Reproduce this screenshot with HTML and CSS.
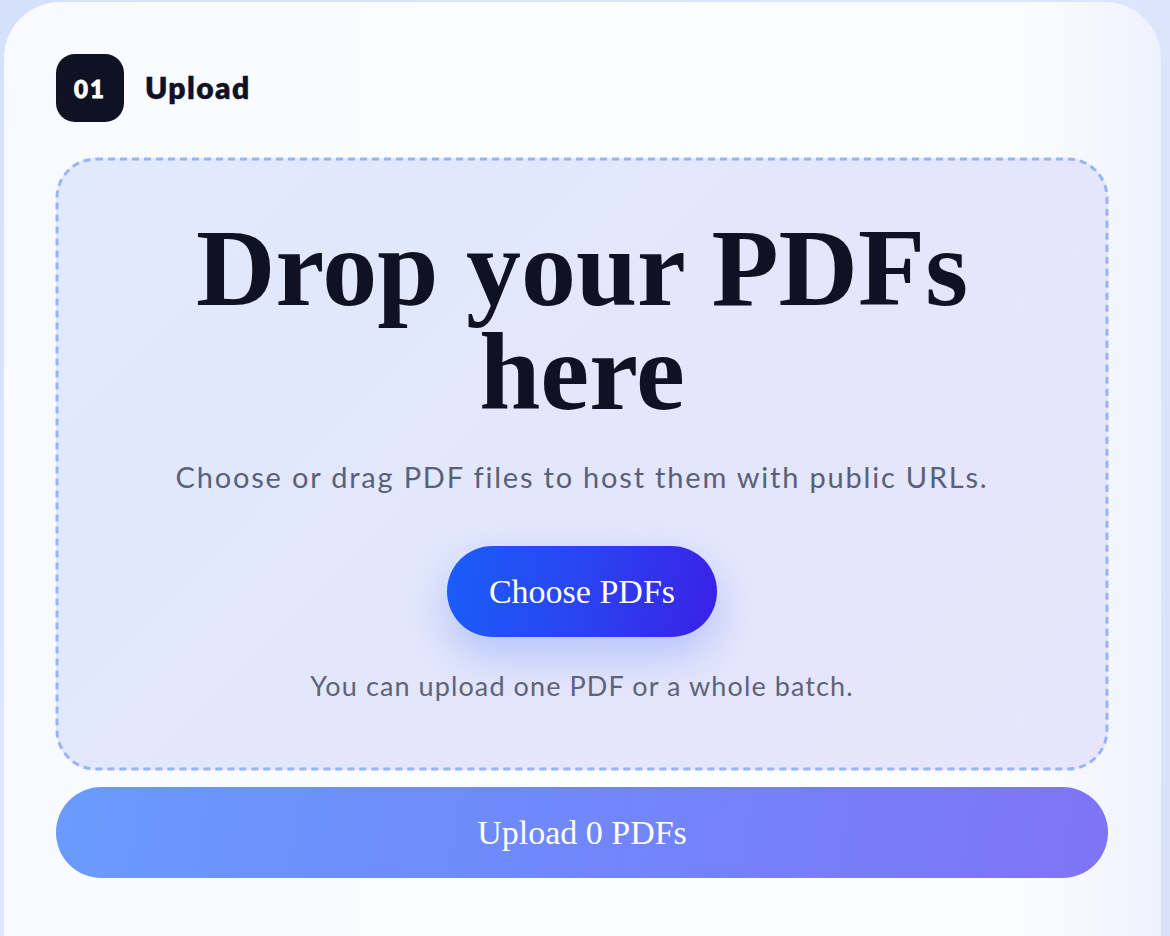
FILE: index.html
```html
<!DOCTYPE html>
<html lang="en">
<head>
    <meta charset="UTF-8">
    <meta name="viewport" content="width=device-width, initial-scale=1.0">
    <title>Host PDFs</title>
    <link rel="stylesheet" href="styles.css">
</head>
<body>
    <main class="upload-card">
        <div class="step-head">
            <span class="step-num">01</span>
            <h2 class="step-title">Upload</h2>
        </div>

        <!-- drop area, dashed frame drawn as svg so the dash length can be set -->
        <div class="dropzone" id="dropzone">
            <svg class="dash-frame" aria-hidden="true">
                <rect x="0" y="0" width="100%" height="100%" rx="39" ry="39"></rect>
            </svg>
            <h1 class="drop-title">Drop your PDFs<br>here</h1>
            <p class="drop-text">Choose or drag PDF files to host them with public URLs.</p>
            <button type="button" class="choose-btn">Choose PDFs</button>
            <p class="drop-hint">You can upload one PDF or a whole batch.</p>
        </div>

        <button type="button" class="upload-btn" id="uploadBtn">Upload 0 PDFs</button>
    </main>
</body>
</html>
```

FILE: styles.css
```css
html, body {
    margin: 0;
    height: 100%;
    overflow: hidden;
}
body {
    background: linear-gradient(135deg, #d5e1fb 0%, #dde7fc 40%, #d8e1f8 100%);
    padding: 2px 9px 0 4px;
    font-family: 'Lato', 'Noto Sans', sans-serif;
    color: #0f1222;
}
.upload-card {
    box-sizing: border-box;
    height: 1000px;
    padding: 52px 53px 0 52px;
    border-radius: 56px 56px 0 0;
    background: linear-gradient(90deg, #f8faff 0%, #fcfdff 50%, #fbfcff 88%, #eef2fd 100%);
}
.step-head {
    display: flex;
    align-items: center;
    gap: 21px;
}
.step-num {
    width: 68px;
    height: 68px;
    border-radius: 19px;
    background: #0f1222;
    color: #fff;
    display: flex;
    align-items: center;
    justify-content: center;
    font-weight: 900;
    font-size: 24px;
    letter-spacing: 2px;
    -webkit-text-stroke: 0.9px #fff;
}
.step-title {
    margin: 0 0 3px;
    font-size: 30px;
    font-weight: 800;
    letter-spacing: 1.4px;
    color: #0f1222;
    -webkit-text-stroke: 0.4px #0f1222;
}
.dropzone {
    position: relative;
    margin-top: 36px;
    box-sizing: border-box;
    height: 612px;
    padding-top: 58px;
    border-radius: 40px;
    background: linear-gradient(135deg, #e1e9fc 0%, #e3e7fb 50%, #e7e5fb 100%);
    text-align: center;
}
.dash-frame {
    position: absolute;
    top: 1px;
    left: 1px;
    width: calc(100% - 2px);
    height: calc(100% - 2px);
    overflow: visible;
    pointer-events: none;
}
.dash-frame rect {
    fill: none;
    stroke: #97b4f5;
    stroke-width: 3;
    stroke-dasharray: 7 5;
}
.drop-title {
    margin: 0;
    font-family: 'Liberation Serif', 'Times New Roman', serif;
    font-weight: 700;
    font-size: 110px;
    line-height: 104px;
    color: #0f1222;
}
.drop-text {
    margin: 33px 0 0;
    font-size: 29px;
    line-height: 39px;
    letter-spacing: 1.8px;
    color: #5a6079;
}
.choose-btn {
    margin-top: 50px;
    width: 270px;
    height: 91px;
    border: none;
    border-radius: 46px;
    background: linear-gradient(100deg, #1a5dfb 0%, #2a44f0 50%, #3a20e6 100%);
    box-shadow: 0 18px 44px rgba(70, 110, 250, 0.3);
    color: #fff;
    font-family: 'Liberation Serif', 'Times New Roman', serif;
    font-size: 34px;
    cursor: pointer;
}
.drop-hint {
    margin: 31px 0 0;
    font-size: 27px;
    line-height: 36px;
    letter-spacing: 1.1px;
    color: #5d637a;
}
.upload-btn {
    display: block;
    width: 100%;
    height: 91px;
    margin-top: 17px;
    border: none;
    border-radius: 46px;
    background: linear-gradient(100deg, #6a9bfd 0%, #6f89fa 45%, #7f74f5 100%);
    color: #fff;
    font-family: 'Liberation Serif', 'Times New Roman', serif;
    font-size: 34px;
    cursor: pointer;
}
```
